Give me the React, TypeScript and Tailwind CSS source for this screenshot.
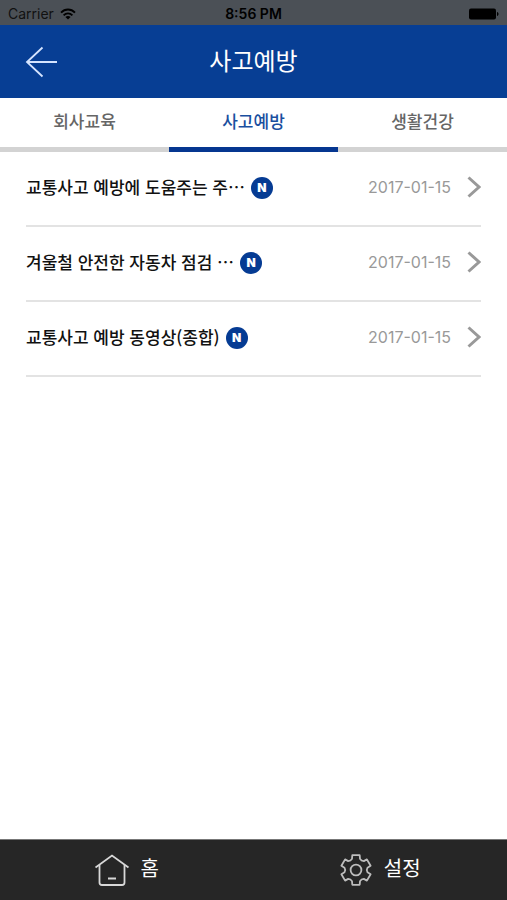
const tabs = [
    { label: "회사교육", active: false },
    { label: "사고예방", active: true },
    { label: "생활건강", active: false },
];

const posts = [
    { title: "교통사고 예방에 도움주는 주…", date: "2017-01-15" },
    { title: "겨울철 안전한 자동차 점검 …", date: "2017-01-15" },
    { title: "교통사고 예방 동영상(종합)", date: "2017-01-15" },
];

function StatusBar() {
    return (
        <div className="grid grid-cols-3 items-center h-[25px] px-2 pt-[2px] bg-[#4b5056] text-black font-['Inter',sans-serif] text-sm">
            <div className="flex items-center gap-[6px]">
                <span className="text-[#111]">Carrier</span>
                <svg width="16" height="12" viewBox="0 0 16 12" fill="none" stroke="#000" strokeWidth="1.9">
                    <path d="M1 4.6C5 0.5 11 0.5 15 4.6" />
                    <path d="M3.6 7.3C6.2 4.7 9.8 4.7 12.4 7.3" />
                    <path d="M8 11.6L5.4 9C6.8 7.6 9.2 7.6 10.6 9Z" fill="#000" stroke="none" />
                </svg>
            </div>
            <span className="text-center font-semibold">8:56 PM</span>
            <svg className="justify-self-end" width="30" height="12" viewBox="0 0 30 12">
                <rect x="0" y="0.5" width="27" height="11" rx="2" />
                <path d="M28 4C30 4.5 30 7.5 28 8Z" />
            </svg>
        </div>
    );
}

function Header() {
    return (
        <header className="grid grid-cols-[1fr_auto_1fr] items-center h-[73px] px-[25px] bg-[#073e94] text-white">
            <button type="button" aria-label="뒤로" className="justify-self-start">
                <svg width="32" height="32" viewBox="0 0 32 32" fill="none" stroke="#d5e4ff" strokeWidth="1.8">
                    <path d="M32 16H1.5M17.5 1.5L2 16L17.5 30.5" />
                </svg>
            </button>
            <h1 className="text-2xl leading-8 pb-1">사고예방</h1>
        </header>
    );
}

function NewBadge() {
    return (
        <span className="flex shrink-0 items-center justify-center size-[22px] mt-[3px] rounded-full bg-[#053b93] text-white font-['Inter',sans-serif] text-xs font-black">
            N
        </span>
    );
}

export default function App() {
    return (
        <div lang="ko" className="flex flex-col min-h-screen bg-white font-['Noto_Sans_CJK_KR',sans-serif]">
            <StatusBar />
            <Header />

            {/* Category tabs */}
            <nav className="grid grid-cols-3">
                {tabs.map((tab) => (
                    <button
                        key={tab.label}
                        type="button"
                        className={
                            tab.active
                                ? "h-[54px] pb-1 border-b-[5px] border-[#053690] text-[17px] font-medium text-[#1a4f9f]"
                                : "h-[54px] pb-1 border-b-[5px] border-[#d3d3d3] text-[17px] font-medium text-[#666]"
                        }
                    >
                        {tab.label}
                    </button>
                ))}
            </nav>

            <main className="flex-1 px-[26px]">
                <ul>
                    {posts.map((post) => (
                        <li key={post.title} className="border-b-2 border-[#e3e3e3]">
                            <a href="#" className="flex items-center h-[73px] pb-1">
                                <span className="text-[17px] font-medium text-[#111] mr-[6px]">{post.title}</span>
                                <NewBadge />
                                <time className="ml-auto font-['Inter',sans-serif] text-base text-[#999]">{post.date}</time>
                                <svg className="ml-4" width="14" height="22" viewBox="0 0 14 22" fill="none" stroke="#999" strokeWidth="3">
                                    <path d="M1.5 1.5L12 11L1.5 20.5" />
                                </svg>
                            </a>
                        </li>
                    ))}
                </ul>
            </main>

            <footer className="grid grid-cols-2 h-[61px] border-t border-[#777] bg-[#262626] text-white">
                <button type="button" className="flex items-center justify-center gap-3">
                    <svg width="34" height="32" viewBox="0 0 34 32" fill="none" stroke="#d8d8d8" strokeWidth="1.8">
                        <path d="M0.5 13.5L17 1.5L33.5 13.5" />
                        <path d="M4.5 11V28.5Q4.5 31 7 31H27Q29.5 31 29.5 28.5V11" />
                        <path d="M13 24.5H21" strokeWidth="2" />
                    </svg>
                    <span className="text-xl pb-1">홈</span>
                </button>
                <button type="button" className="flex items-center justify-center gap-3">
                    <svg width="32" height="32" viewBox="0 0 32 32" fill="none" stroke="#bdbdbd" strokeWidth="1.8" strokeLinejoin="round">
                        <path d="M12.3 1.2H19.7L20 4.9Q21.3 7 23.8 7.1L26.9 5.4L30.6 11.8L27.5 13.7Q26 16 27.5 18.3L30.6 20.2L26.9 26.6L23.8 24.9Q21.3 25 20 27.1L19.7 30.8H12.3L12 27.1Q10.7 25 8.2 24.9L5.1 26.6L1.4 20.2L4.5 18.3Q6 16 4.5 13.7L1.4 11.8L5.1 5.4L8.2 7.1Q10.7 7 12 4.9Z" />
                        <circle cx="16" cy="16" r="5.4" />
                    </svg>
                    <span className="text-xl pb-1">설정</span>
                </button>
            </footer>
        </div>
    );
}
